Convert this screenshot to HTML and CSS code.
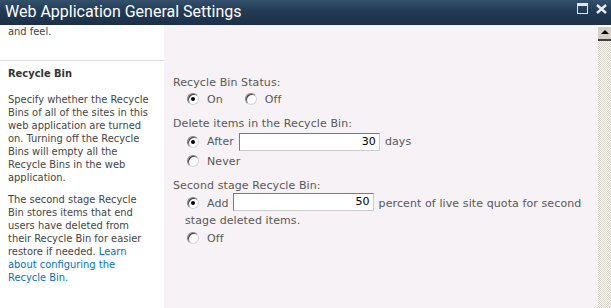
FILE: index.html
```html
<!DOCTYPE html>
<html lang="en">
<head>
    <meta charset="UTF-8">
    <title>Web Application General Settings</title>
    <link rel="stylesheet" href="styles.css">
</head>
<body>
    <!-- Dialog title bar -->
    <div class="titlebar">
        <span class="title">Web Application General Settings</span>
        <div class="title-icons">
            <span class="icon-max"></span>
            <svg class="icon-close" width="11" height="10" viewBox="0 0 11 10">
                <path d="M1 1 L10 9 M10 1 L1 9" stroke="#e8edf2" stroke-width="2.4" fill="none"/>
            </svg>
        </div>
    </div>

    <div class="frame">
        <div class="content">
            <!-- tail of the previous section -->
            <div class="section first">
                <div class="desc">
                    <p>and feel.</p>
                </div>
                <div class="controls"></div>
            </div>

            <!-- Recycle Bin -->
            <div class="section">
                <div class="desc">
                    <h3>Recycle Bin</h3>
                    <p>Specify whether the Recycle Bins of all of the sites in this web application are turned on. Turning off the Recycle Bins will empty all the Recycle Bins in the web application.</p>
                    <p>The second stage Recycle Bin stores items that end users have deleted from their Recycle Bin for easier restore if needed. <a href="#">Learn about configuring the Recycle Bin.</a></p>
                </div>
                <div class="controls">
                    <div class="label top">Recycle Bin Status:</div>
                    <div class="option">
                        <span class="radio checked"></span>On
                        <span class="radio spaced"></span>Off
                    </div>

                    <div class="label">Delete items in the Recycle Bin:</div>
                    <div class="option tall">
                        <span class="radio checked"></span>After
                        <span class="field">30</span>days
                    </div>
                    <div class="option">
                        <span class="radio"></span>Never
                    </div>

                    <div class="label">Second stage Recycle Bin:</div>
                    <div class="option wrap"><span class="radio checked"></span>Add<span class="field">50</span>percent of live site quota for second stage deleted items.</div>
                    <div class="option">
                        <span class="radio"></span>Off
                    </div>
                </div>
            </div>
        </div>

        <!-- Vertical scrollbar (cut off at the window edge) -->
        <div class="scrollbar">
            <div class="scroll-up"></div>
            <div class="scroll-track"></div>
        </div>
    </div>
</body>
</html>
```

FILE: styles.css
```css
/* Basic reset */
* {
    margin: 0;
    padding: 0;
    box-sizing: border-box;
}
body {
    width: 611px;
    height: 308px;
    overflow: hidden;
    background: #fff;
    font-family: "DejaVu Sans", Verdana, sans-serif;
}
/* Title bar */
.titlebar {
    height: 25px;
    display: flex;
    align-items: center;
    justify-content: space-between;
    padding: 0 4px 2px 5px;
    background: linear-gradient(to bottom, #34506c, #223a53 45%, #1c3149);
}
.title {
    color: #fff;
    font-family: Roboto, "Liberation Sans", sans-serif;
    font-size: 16px;
}
.title-icons {
    display: flex;
    align-items: center;
    gap: 8px;
    margin-top: -6px;
}
.icon-max {
    display: block;
    width: 11px;
    height: 11px;
    border: 1px solid #dfe5ec;
    border-top-width: 3px;
}
/* Frame: content + scrollbar */
.frame {
    display: flex;
    height: 283px;
}
.content {
    flex: 1;
    overflow: hidden;
}
.section {
    display: flex;
    border-top: 1px solid #dcdcdc;
}
.section.first {
    height: 35px;
    border-top: none;
}
.desc {
    width: 164px;
    flex-shrink: 0;
    padding: 0 14px 0 8px;
    font-family: "DejaVu Sans Condensed", "DejaVu Sans", sans-serif;
    font-size: 11px;
    line-height: 13px;
    color: #444;
}
.desc h3 {
    font-size: 11px;
    font-weight: bold;
    color: #333;
    margin: 6px 0 13px;
}
.desc p {
    margin-bottom: 9px;
}
.desc a {
    color: #0072bc;
    text-decoration: none;
}
.controls {
    flex: 1;
    background: #f6f2f6;
    padding: 15px 0 80px 9px;
    font-size: 11px;
    color: #585858;
    letter-spacing: 0.1px;
}
.label {
    line-height: 14px;
    margin-top: 9px;
}
.label.top {
    margin-top: 0;
}
.option {
    display: flex;
    align-items: center;
    padding-left: 14px;
    min-height: 18px;
    line-height: 17px;
}
.option.tall {
    min-height: 21px;
}
.option.wrap {
    display: block;
    padding: 2px 0 0 12px;
    line-height: 17px;
}
.radio {
    display: inline-block;
    vertical-align: -2px;
    width: 12px;
    height: 12px;
    margin: 0 8px 0 0;
    border-radius: 50%;
    background: #fff;
    border: 1px solid #808080;
    border-right-color: #d4d4d4;
    border-bottom-color: #d4d4d4;
    box-shadow: inset 1px 1px 0 #404040;
    position: relative;
}
.option.wrap .radio {
    margin-left: 2px;
}
.radio.checked::after {
    content: "";
    position: absolute;
    left: 3px;
    top: 3px;
    width: 4px;
    height: 4px;
    border-radius: 50%;
    background: #000;
}
.radio.spaced {
    margin-left: 22px;
}
.field {
    display: inline-block;
    width: 141px;
    height: 18px;
    margin: 0 5px;
    padding-right: 3px;
    text-align: right;
    background: #fff;
    color: #000;
    line-height: 16px;
    border: 1px solid #ccc;
    border-top-color: #7a7a7a;
    border-left-color: #7a7a7a;
}
.option.wrap .field {
    vertical-align: 2px;
    margin: -8px 5px -4px 4px;
}
/* Scrollbar */
.scrollbar {
    width: 13px;
    display: flex;
    flex-direction: column;
    padding-top: 1px;
}
.scroll-up {
    height: 15px;
    background: #d4d0c8;
    border-bottom: 2px solid #404040;
    border-top: 1px solid #fff;
    position: relative;
}
.scroll-up::after {
    content: "";
    position: absolute;
    left: 3px;
    top: 3px;
    border-left: 4px solid transparent;
    border-right: 4px solid transparent;
    border-bottom: 4px solid #000;
}
.scroll-track {
    flex: 1;
    background-color: #fff;
    background-image: conic-gradient(#d4d0c8 25%, #fff 0 50%, #d4d0c8 0 75%, #fff 0);
    background-size: 2px 2px;
}
```
